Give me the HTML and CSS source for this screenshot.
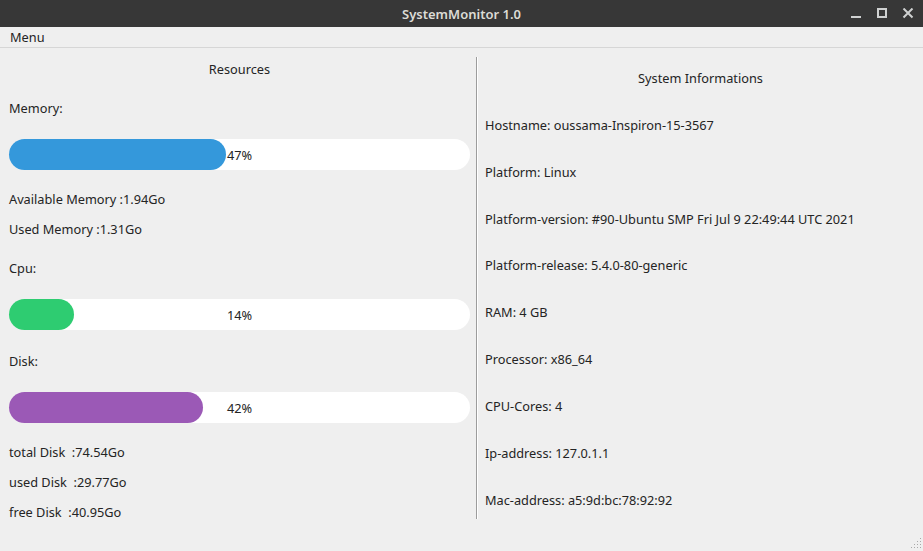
FILE: index.html
```html
<!DOCTYPE html>
<html>
<head>
<meta charset="utf-8">
<title>SystemMonitor 1.0</title>
<link rel="stylesheet" href="styles.css">
</head>
<body>
<div class="window">
  <header class="titlebar">
    <div class="tb-spacer"></div>
    <div class="tb-title">SystemMonitor 1.0</div>
    <div class="tb-controls">
      <svg class="ctl" width="12" height="12" viewBox="0 0 12 12"><rect x="1" y="8" width="10" height="2" fill="#cfd1d1"/></svg>
      <svg class="ctl" width="12" height="12" viewBox="0 0 12 12"><rect x="2" y="1" width="8" height="8" fill="none" stroke="#cfd1d1" stroke-width="2"/></svg>
      <svg class="ctl" width="12" height="12" viewBox="0 0 12 12"><path d="M1.5 0.5 L10.5 9.5 M10.5 0.5 L1.5 9.5" stroke="#cfd1d1" stroke-width="2"/></svg>
    </div>
  </header>
  <nav class="menubar"><span class="menu-item">Menu</span></nav>
  <main class="main">
    <section class="resources">
      <div class="res-title">Resources</div>
      <div class="heading">Memory:</div>
      <div class="bar"><div class="fill fill-mem" style="width:47%"></div><span class="pct">47%</span></div>
      <div class="stat first">Available Memory :1.94Go</div>
      <div class="stat">Used Memory :1.31Go</div>
      <div class="heading">Cpu:</div>
      <div class="bar"><div class="fill fill-cpu" style="width:14%"></div><span class="pct">14%</span></div>
      <div class="heading after-bar">Disk:</div>
      <div class="bar"><div class="fill fill-disk" style="width:42%"></div><span class="pct">42%</span></div>
      <div class="stat first">total Disk&nbsp; :74.54Go</div>
      <div class="stat">used Disk&nbsp; :29.77Go</div>
      <div class="stat">free Disk&nbsp; :40.95Go</div>
    </section>
    <div class="divider"></div>
    <section class="sysinfo">
      <div class="info-title">System Informations</div>
      <div class="info">Hostname: oussama-Inspiron-15-3567</div>
      <div class="info">Platform: Linux</div>
      <div class="info">Platform-version: #90-Ubuntu SMP Fri Jul 9 22:49:44 UTC 2021</div>
      <div class="info">Platform-release: 5.4.0-80-generic</div>
      <div class="info">RAM: 4 GB</div>
      <div class="info">Processor: x86_64</div>
      <div class="info">CPU-Cores: 4</div>
      <div class="info">Ip-address: 127.0.1.1</div>
      <div class="info">Mac-address: a5:9d:bc:78:92:92</div>
    </section>
  </main>
  <svg class="grip" width="12" height="12" viewBox="0 0 12 12">
    <g fill="#a9a9a9">
      <rect x="10" y="1" width="1" height="1"/>
      <rect x="7" y="4" width="1" height="1"/><rect x="10" y="4" width="1" height="1"/>
      <rect x="4" y="7" width="1" height="1"/><rect x="7" y="7" width="1" height="1"/><rect x="10" y="7" width="1" height="1"/>
      <rect x="1" y="10" width="1" height="1"/><rect x="4" y="10" width="1" height="1"/><rect x="7" y="10" width="1" height="1"/><rect x="10" y="10" width="1" height="1"/>
    </g>
  </svg>
</div>
</body>
</html>
```
FILE: styles.css
```css
* { box-sizing: border-box; }
html, body { margin: 0; padding: 0; }
body {
  width: 923px;
  height: 551px;
  overflow: hidden;
  background: #efefef;
  font-family: "Noto Sans", "DejaVu Sans", sans-serif;
  font-size: 12.75px;
  color: #242424;
}
.window { position: relative; width: 923px; height: 551px; }
.titlebar {
  height: 27px;
  background: #373737;
  display: grid;
  grid-template-columns: 1fr auto 1fr;
  align-items: center;
}
.tb-title {
  color: #dcdcd6;
  font-weight: 600;
  font-size: 13px;
}
.tb-controls {
  justify-self: end;
  display: flex;
  gap: 14px;
  padding-right: 9px;
  align-items: center;
}
.ctl { display: block; }
.menubar {
  height: 21px;
  border-bottom: 1px solid #d6d6d6;
  display: flex;
  align-items: center;
  padding-left: 10px;
}
.menu-item { line-height: 18px; }
.main {
  display: flex;
  align-items: flex-start;
}
.resources {
  width: 476px;
  padding: 0 6px 0 9px;
  display: flex;
  flex-direction: column;
}
.resources > div { line-height: 18px; }
.res-title { text-align: center; margin-top: 12px; }
.heading { margin-top: 21px; }
.heading.after-bar { margin-top: 22px; }
.bar {
  margin-top: 22px;
  height: 31px;
  background: #ffffff;
  border-radius: 15.5px;
  display: grid;
  grid-template-areas: "stack";
  align-items: center;
}
.resources > .bar { line-height: 31px; }
.fill {
  grid-area: stack;
  height: 31px;
  border-radius: 15.5px;
}
.fill-mem { background: #3498db; }
.fill-cpu { background: #2ecc71; }
.fill-disk { background: #9b59b6; }
.pct {
  grid-area: stack;
  justify-self: center;
  line-height: 18px;
}
.stat { margin-top: 12px; }
.stat.first { margin-top: 20px; }
.divider {
  width: 2px;
  height: 462px;
  margin-top: 9px;
  border-left: 1px solid #9c9c9c;
  border-right: 1px solid #ffffff;
}
.sysinfo {
  flex: 1;
  padding-left: 7px;
  display: flex;
  flex-direction: column;
}
.sysinfo > div { line-height: 18px; }
.info-title { text-align: center; margin-top: 21px; padding-right: 7px; }
.info { margin-top: 28.85px; }
.grip { position: absolute; right: 1px; bottom: 2px; }
```
